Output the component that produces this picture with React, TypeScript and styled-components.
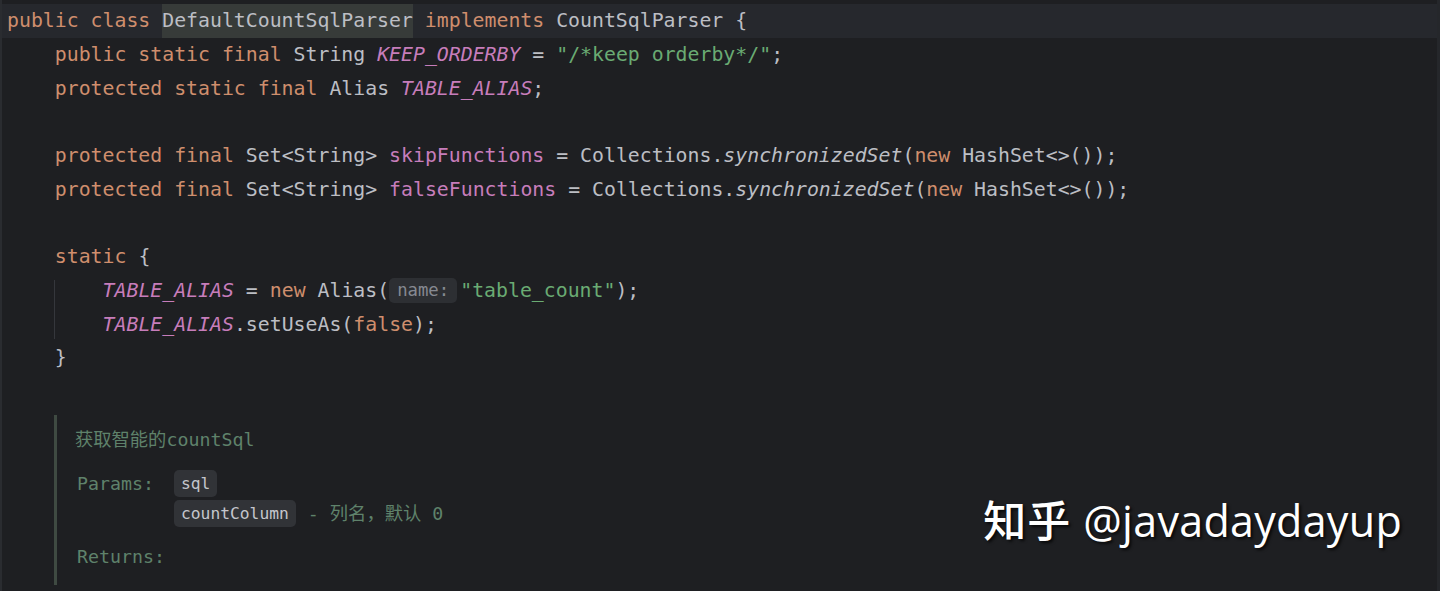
import React from 'react'
import styled, { createGlobalStyle, css } from 'styled-components'

const GlobalStyle = createGlobalStyle`
  html, body {
    margin: 0;
    padding: 0;
    background: #1e1f22;
  }
  #root {
    height: 591px;
  }
`

type Kind = 'kw' | 'str' | 'field' | 'staticField' | 'staticCall' | 'plain'

const colors: Record<Kind, string> = {
  kw: '#cf8e6d',
  str: '#6aab73',
  field: '#c77dbb',
  staticField: '#c77dbb',
  staticCall: '#bcbec4',
  plain: '#bcbec4',
}

const Editor = styled.div`
  position: relative;
  width: 1440px;
  height: 591px;
  box-sizing: border-box;
  padding-top: 4px;
  background: #1e1f22;
  border-left: 2px solid #2a2c30;
  border-right: 3px solid #25272b;
  overflow: hidden;
  font-family: "DejaVu Sans Mono", "Noto Sans CJK SC", monospace;
  font-size: 19.84px;
  color: #bcbec4;
`

const Line = styled.div<{ $indent?: number; $current?: boolean }>`
  height: 33.7px;
  display: flex;
  align-items: center;
  white-space: pre;
  padding-left: ${p => 5 + (p.$indent || 0) * 11.95}px;
  ${p => p.$current && css`
    background: #26282d;
  `}
`

const Tok = styled.span<{ $k?: Kind }>`
  color: ${p => colors[p.$k || 'plain']};
  font-style: ${p => (p.$k === 'staticField' || p.$k === 'staticCall') ? 'italic' : 'normal'};
`

const Usage = styled.span`
  display: inline-flex;
  align-items: center;
  height: 33.7px;
  background: #373b39;
`

const Hint = styled.span`
  display: inline-flex;
  align-items: center;
  height: 25px;
  margin: 0 3px 0 0;
  padding: 0 8px;
  border-radius: 5px;
  background: #2d2f33;
  color: #868991;
  font-size: 17.3px;
`

const Guide = styled.div`
  position: relative;
  &::before {
    content: '';
    position: absolute;
    left: 52px;
    top: 6px;
    bottom: 2px;
    width: 1px;
    background: #35373c;
  }
`

const Doc = styled.div`
  margin: 7px 0 0 52px;
  width: 900px;
  height: 170px;
  box-sizing: border-box;
  border-left: 3px solid #3f4a42;
  padding: 13px 0 0 18px;
  color: #5f826b;
  font-size: 18.3px;
`

const DocSummary = styled.div`
  height: 24px;
  line-height: 24px;
  white-space: pre;
`

const Params = styled.div`
  display: grid;
  grid-template-columns: 99px auto;
  row-gap: 3px;
  margin-top: 18px;
  align-items: center;
`

const Label = styled.div`
  padding-left: 2px;
  white-space: pre;
`

const ParamRow = styled.div`
  display: flex;
  align-items: center;
  gap: 12px;
  white-space: pre;
`

const Chip = styled.span`
  display: inline-flex;
  align-items: center;
  height: 27px;
  padding: 0 7px;
  border-radius: 5px;
  background: #313337;
  color: #c4c6cc;
  font-size: 16.3px;
`

const ParamDesc = styled.span`
  color: #5f826b;
  margin-top: -3px;
`

const Returns = styled.div`
  margin-top: 18px;
  height: 24px;
  line-height: 24px;
  padding-left: 2px;
`

const Watermark = styled.div`
  position: absolute;
  right: 35px;
  bottom: 41px;
  display: flex;
  align-items: baseline;
  gap: 12px;
  color: #ffffff;
  font-family: "Open Sans", "Noto Sans CJK SC", sans-serif;
  font-size: 43px;
  letter-spacing: 0.3px;
  text-shadow: 2px 2px 3px rgba(0, 0, 0, 0.75);
  white-space: pre;
`

const WatermarkCjk = styled.span`
  font-family: "Noto Sans CJK SC", sans-serif;
  font-weight: 500;
  letter-spacing: 1px;
`

export default function App() {
  return (
    <>
      <GlobalStyle />
      <Editor>
        <Line $current>
          <Tok $k="kw">public class </Tok>
          <Usage>DefaultCountSqlParser</Usage>
          <Tok $k="kw"> implements </Tok>
          <Tok>CountSqlParser {'{'}</Tok>
        </Line>
        <Line $indent={4}>
          <Tok $k="kw">public static final </Tok>
          <Tok>String </Tok>
          <Tok $k="staticField">KEEP_ORDERBY</Tok>
          <Tok> = </Tok>
          <Tok $k="str">"/*keep orderby*/"</Tok>
          <Tok>;</Tok>
        </Line>
        <Line $indent={4}>
          <Tok $k="kw">protected static final </Tok>
          <Tok>Alias </Tok>
          <Tok $k="staticField">TABLE_ALIAS</Tok>
          <Tok>;</Tok>
        </Line>
        <Line />
        <Line $indent={4}>
          <Tok $k="kw">protected final </Tok>
          <Tok>Set&lt;String&gt; </Tok>
          <Tok $k="field">skipFunctions</Tok>
          <Tok> = Collections.</Tok>
          <Tok $k="staticCall">synchronizedSet</Tok>
          <Tok>(</Tok>
          <Tok $k="kw">new </Tok>
          <Tok>HashSet&lt;&gt;());</Tok>
        </Line>
        <Line $indent={4}>
          <Tok $k="kw">protected final </Tok>
          <Tok>Set&lt;String&gt; </Tok>
          <Tok $k="field">falseFunctions</Tok>
          <Tok> = Collections.</Tok>
          <Tok $k="staticCall">synchronizedSet</Tok>
          <Tok>(</Tok>
          <Tok $k="kw">new </Tok>
          <Tok>HashSet&lt;&gt;());</Tok>
        </Line>
        <Line />
        <Line $indent={4}>
          <Tok $k="kw">static </Tok>
          <Tok>{'{'}</Tok>
        </Line>
        <Guide>
          <Line $indent={8}>
            <Tok $k="staticField">TABLE_ALIAS</Tok>
            <Tok> = </Tok>
            <Tok $k="kw">new </Tok>
            <Tok>Alias(</Tok>
            <Hint>name:</Hint>
            <Tok $k="str">"table_count"</Tok>
            <Tok>);</Tok>
          </Line>
          <Line $indent={8}>
            <Tok $k="staticField">TABLE_ALIAS</Tok>
            <Tok>.setUseAs(</Tok>
            <Tok $k="kw">false</Tok>
            <Tok>);</Tok>
          </Line>
        </Guide>
        <Line $indent={4}>
          <Tok>{'}'}</Tok>
        </Line>
        <Line />
        <Doc>
          <DocSummary>获取智能的countSql</DocSummary>
          <Params>
            <Label>Params:</Label>
            <ParamRow>
              <Chip>sql</Chip>
            </ParamRow>
            <span />
            <ParamRow>
              <Chip>countColumn</Chip>
              <ParamDesc>- 列名，默认 0</ParamDesc>
            </ParamRow>
          </Params>
          <Returns>Returns:</Returns>
        </Doc>
        <Watermark>
          <WatermarkCjk>知乎</WatermarkCjk>
          <span>@javadaydayup</span>
        </Watermark>
      </Editor>
    </>
  )
}
